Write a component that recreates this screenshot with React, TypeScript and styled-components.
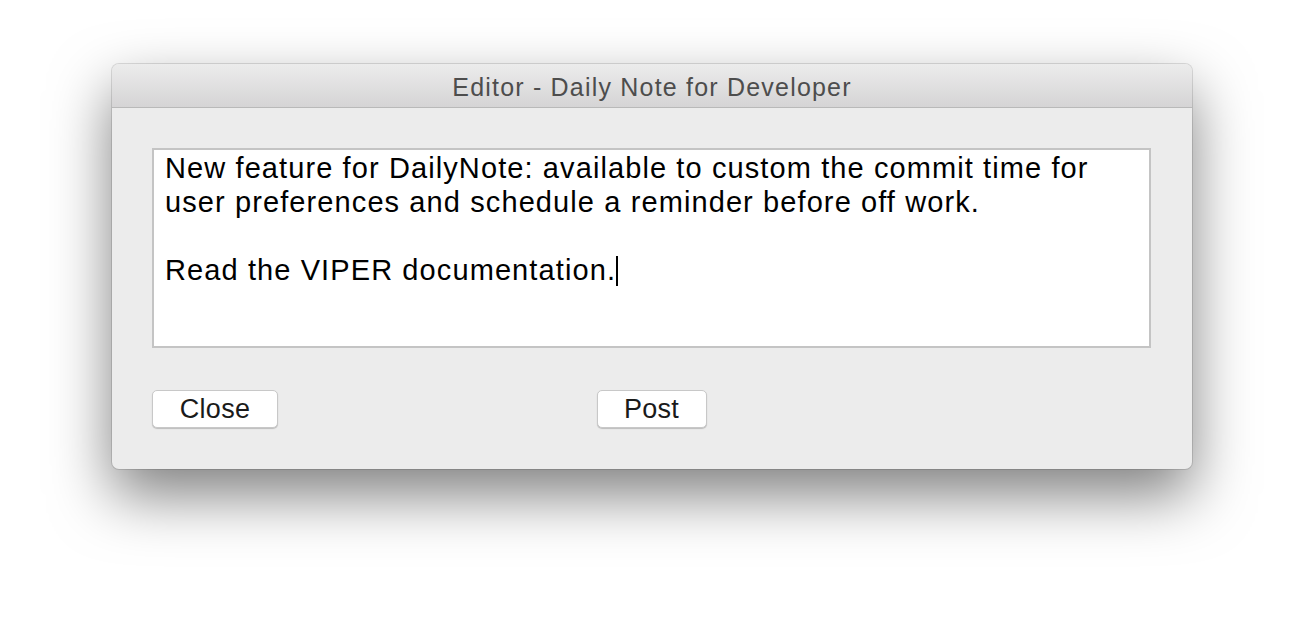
import React from "react";
import styled, { createGlobalStyle } from "styled-components";

const GlobalStyle = createGlobalStyle`
  html, body {
    margin: 0;
    padding: 0;
    background: #ffffff;
  }
  body {
    font-family: "Liberation Sans", Arial, sans-serif;
  }
`;

const Page = styled.div`
  min-height: 630px;
  box-sizing: border-box;
  padding-top: 64px;
  display: flex;
  justify-content: center;
  align-items: flex-start;
`;

const Window = styled.div`
  width: 1080px;
  height: 405px;
  display: flex;
  flex-direction: column;
  background: #ececec;
  border-radius: 7px;
  overflow: hidden;
  box-shadow: 0 0 0 1px rgba(0, 0, 0, 0.12), 0 26px 60px rgba(0, 0, 0, 0.5);
`;

const TitleBar = styled.div`
  height: 44px;
  box-sizing: border-box;
  padding-top: 3px;
  flex-shrink: 0;
  display: flex;
  align-items: center;
  justify-content: center;
  background: linear-gradient(#ececec, #d5d4d5);
  border-bottom: 1px solid #b9b9b9;
  color: #4d4d4d;
  font-size: 25px;
  letter-spacing: 1.2px;
`;

const Body = styled.div`
  flex: 1;
  display: flex;
  flex-direction: column;
  padding: 40px 41px 0 40px;
  gap: 42px;
`;

const TextArea = styled.div`
  height: 200px;
  box-sizing: border-box;
  background: #ffffff;
  border: 2px solid #c4c4c4;
  padding: 1px 11px;
  font-size: 29px;
  letter-spacing: 1.1px;
  line-height: 34px;
  color: #000;
  white-space: pre-wrap;
`;

const Caret = styled.span`
  display: inline-block;
  width: 0;
  height: 30px;
  border-left: 2px solid #000;
  vertical-align: -6px;
`;

const ButtonRow = styled.div`
  display: grid;
  grid-template-columns: 1fr auto 1fr;
  align-items: center;
`;

const Button = styled.button<{ $width: number }>`
  width: ${(p) => p.$width}px;
  height: 38px;
  justify-self: start;
  background: #ffffff;
  border: 1px solid #c8c8c8;
  border-radius: 5px;
  box-shadow: 0 1px 1px rgba(0, 0, 0, 0.2);
  font-family: "Liberation Sans", Arial, sans-serif;
  font-size: 27px;
  letter-spacing: 0.3px;
  color: #1a1a1a;
  padding: 0;
`;

export default function App() {
  return (
    <>
      <GlobalStyle />
      <Page>
        <Window>
          <TitleBar>Editor - Daily Note for Developer</TitleBar>
          <Body>
            <TextArea>
              {"New feature for DailyNote: available to custom the commit time for\nuser preferences and schedule a reminder before off work.\n\nRead the VIPER documentation."}
              <Caret />
            </TextArea>
            <ButtonRow>
              <Button $width={126}>Close</Button>
              <Button $width={110}>Post</Button>
              <span />
            </ButtonRow>
          </Body>
        </Window>
      </Page>
    </>
  );
}
